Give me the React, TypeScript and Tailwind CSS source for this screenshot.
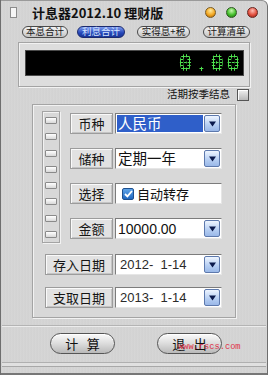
import type { ReactNode } from 'react';
import clsx from 'clsx';

const etched = 'border border-[#a4a4a4] shadow-[1px_1px_0_#f2f2f2,inset_1px_1px_0_#f2f2f2]';

function Tab({ label, active, w, className }: { label: string; active?: boolean; w: string; className?: string }) {
  return (
    <div
      className={clsx(
        'h-[12px] rounded-full border flex items-center justify-center text-[9.5px] leading-none',
        w,
        className,
        active
          ? 'border-[#1b2a6e] bg-[linear-gradient(#7d9cf0,#2546b8_60%,#1a3596)] text-[#d6e4ff]'
          : 'border-[#4a4a4a] bg-[linear-gradient(#f4f4f4,#c4c4c4)] text-[#1a1a1a]'
      )}
    >
      {label}
    </div>
  );
}

function FieldLabel({ children, w }: { children: ReactNode; w: string }) {
  return (
    <div
      className={clsx(
        'h-[21px] flex items-center justify-center bg-[#e2e2e2] border border-[#9c9c9c] shadow-[inset_1px_1px_0_#fafafa,inset_-1px_-1px_0_#c4c4c4] text-[13px] text-[#151515]',
        w
      )}
    >
      {children}
    </div>
  );
}

function Arrow() {
  return (
    <div className="w-[16px] h-full rounded-[2px] border border-[#5d79ad] bg-[linear-gradient(#eef5ff,#b4cdf2_60%,#9ab8e8)] flex items-center justify-center">
      <svg width="7" height="6" viewBox="0 0 7 6">
        <path d="M0 0.5h7L3.5 5.5z" fill="#0b1a4d" />
      </svg>
    </div>
  );
}

function Combo({ children, selected, arrow = true }: { children: ReactNode; selected?: boolean; arrow?: boolean }) {
  return (
    <div className="flex h-[21px] w-[107px] bg-white border border-[#7c7c7c] border-r-[#e6e6e6] border-b-[#e6e6e6] p-[1px] gap-[1px]">
      <div
        className={clsx(
          'flex-1 flex items-center pl-[1px] leading-none',
          selected ? 'bg-[#2f5fc9] text-white' : 'text-[#111]'
        )}
      >
        {children}
      </div>
      {arrow && <Arrow />}
    </div>
  );
}

export default function App() {
  return (
    <div className="relative w-[268px] h-[375px] overflow-hidden flex flex-col bg-[#d4d4d4] bg-[repeating-linear-gradient(90deg,#d6d6d6_0px,#d1d1d1_1px,#d7d7d7_3px)] shadow-[inset_1px_0_0_#6e6e6e,inset_-1px_0_0_#6e6e6e,inset_0_-2px_0_#777,inset_0_1px_0_#9a9a9a] rounded-tr-[6px] font-['Noto_Sans_CJK_SC','Noto_Sans',sans-serif] select-none">
      {/* title bar */}
      <div className="flex items-center h-[24px] shrink-0">
        <div className="ml-[10px] w-[7px] h-[11px] bg-[#f6f6f6] border border-[#8c8c8c]" />
        <span className="ml-[15px] text-[13px] font-bold text-[#111] leading-none">计息器2012.10 理财版</span>
        <div className="ml-auto mr-[10px] flex gap-[10px]">
          <div className="w-[11px] h-[11px] rounded-full border border-[#7a5a20] bg-[radial-gradient(circle_at_50%_30%,#ffeaa0,#f3a925_55%,#a85c00)]" />
          <div className="w-[11px] h-[11px] rounded-full border border-[#2d5a20] bg-[radial-gradient(circle_at_50%_30%,#c9f7b0,#45c02c_55%,#1d6a10)]" />
          <div className="w-[11px] h-[11px] rounded-full border border-[#6a2520] bg-[radial-gradient(circle_at_50%_30%,#ffbdb4,#e2503f_55%,#8c1c12)]" />
        </div>
      </div>

      {/* tabs */}
      <div className="flex mt-[2px] shrink-0">
        <Tab label="本息合计" w="w-[46px]" className="ml-[22px]" />
        <Tab label="利息合计" w="w-[48px]" className="ml-[9px]" active />
        <Tab label="实得息+税" w="w-[53px]" className="ml-[12px]" />
        <Tab label="计算清单" w="w-[47px]" className="ml-[13px]" />
      </div>

      {/* display */}
      <div className={clsx('mt-[4px] ml-[18px] w-[232px] h-[45px] shrink-0 bg-[#dddddd]', etched)}>
        <div className="mt-[7px] ml-[6px] w-[219px] h-[26px] bg-black border border-[#4a4a4a] flex items-center justify-end pr-[1px]">
          <span className="text-[23px] font-bold leading-none tracking-[2px] text-[#4ee04e] font-['DejaVu_Sans_Mono',monospace] [mask-image:radial-gradient(circle,#000_1px,transparent_1.4px)] [mask-size:3px_3px]">
            0.00
          </span>
        </div>
      </div>

      {/* quarterly */}
      <div className="mt-[1px] h-[13px] shrink-0 flex items-center justify-end pr-[19px]">
        <span className="text-[10.5px] leading-none text-[#111] mr-[7px]">活期按季结息</span>
        <div className="w-[12px] h-[12px] border border-[#555] bg-[linear-gradient(#f0f0f0,#b8b8b8)] shadow-[inset_1px_1px_0_#fff]" />
      </div>

      {/* main group */}
      <div className={clsx('mt-[3px] ml-[32px] w-[204px] h-[214px] shrink-0 bg-[#d8d8d8] flex flex-col', etched)}>
        <div className="flex mt-[6px]">
          <div className={clsx('ml-[9px] w-[18px] h-[132px] flex flex-col items-center pt-[5px] gap-[9.3px]', etched)}>
            {Array.from({ length: 8 }).map((_, i) => (
              <div
                key={i}
                className="w-[12px] h-[7px] border border-[#8a8a8a] bg-[linear-gradient(#ffffff,#d8d8d8)] rounded-[1px]"
              />
            ))}
          </div>
          <div className="ml-[10px] mt-[2px] flex flex-col gap-[14px]">
            <div className="flex gap-[2px]">
              <FieldLabel w="w-[43px]">币种</FieldLabel>
              <Combo selected>
                <span className="text-[14.5px]">人民币</span>
              </Combo>
            </div>
            <div className="flex gap-[2px]">
              <FieldLabel w="w-[43px]">储种</FieldLabel>
              <Combo>
                <span className="text-[14.5px]">定期一年</span>
              </Combo>
            </div>
            <div className="flex gap-[2px]">
              <FieldLabel w="w-[43px]">选择</FieldLabel>
              <Combo arrow={false}>
                <div className="ml-[4px] w-[12px] h-[12px] rounded-[2px] border border-[#1d4f8e] bg-[linear-gradient(#5fa4e8,#1f67c0)] flex items-center justify-center">
                  <svg width="9" height="8" viewBox="0 0 9 8">
                    <path d="M1 4l2.4 2.4L8 1" fill="none" stroke="#fff" strokeWidth="1.8" />
                  </svg>
                </div>
                <span className="ml-[3px] text-[13px]">自动转存</span>
              </Combo>
            </div>
            <div className="flex gap-[2px]">
              <FieldLabel w="w-[43px]">金额</FieldLabel>
              <Combo>
                <span className="text-[14px] font-['Liberation_Sans',sans-serif]">10000.00</span>
              </Combo>
            </div>
          </div>
        </div>

        <div className="mt-[11px] ml-[12px] flex flex-col gap-[12px]">
          <div className="flex gap-[2px]">
            <FieldLabel w="w-[68px]">存入日期</FieldLabel>
            <Combo>
              <span className="ml-[2px] text-[13px] text-[#2a2a2a] font-['Liberation_Sans',sans-serif] whitespace-pre">2012-  1-14</span>
            </Combo>
          </div>
          <div className="flex gap-[2px]">
            <FieldLabel w="w-[68px]">支取日期</FieldLabel>
            <Combo>
              <span className="ml-[2px] text-[13px] text-[#2a2a2a] font-['Liberation_Sans',sans-serif] whitespace-pre">2013-  1-14</span>
            </Combo>
          </div>
        </div>
      </div>

      {/* separator */}
      <div className="mt-[7px] mx-[2px] h-[2px] shrink-0 border-t border-[#b4b4b4] border-b border-b-[#ececec]" />

      {/* buttons */}
      <div className="mt-[6px] flex shrink-0">
        <button className="ml-[50px] w-[65px] h-[21px] rounded-full border border-[#555] bg-[linear-gradient(#fbfbfb,#dcdcdc_50%,#b9b9b9)] shadow-[inset_0_1px_0_#fff] text-[13px] text-[#111] leading-none whitespace-pre">
          计   算
        </button>
        <button className="ml-[42px] w-[65px] h-[21px] rounded-full border border-[#555] bg-[linear-gradient(#fbfbfb,#dcdcdc_50%,#b9b9b9)] shadow-[inset_0_1px_0_#fff] text-[13px] text-[#111] leading-none whitespace-pre">
          退   出
        </button>
      </div>

      {/* bottom lines */}
      <div className="mt-[8px] mx-[2px] h-[5px] shrink-0 border-t border-[#b0b0b0] border-b border-b-[#a8a8a8] bg-[#e0e0e0]" />

      <span className="absolute left-[178px] top-[343px] text-[8.7px] leading-none text-[#e03048] font-['Liberation_Mono',monospace]">
        www.rscs.com
      </span>
    </div>
  );
}
